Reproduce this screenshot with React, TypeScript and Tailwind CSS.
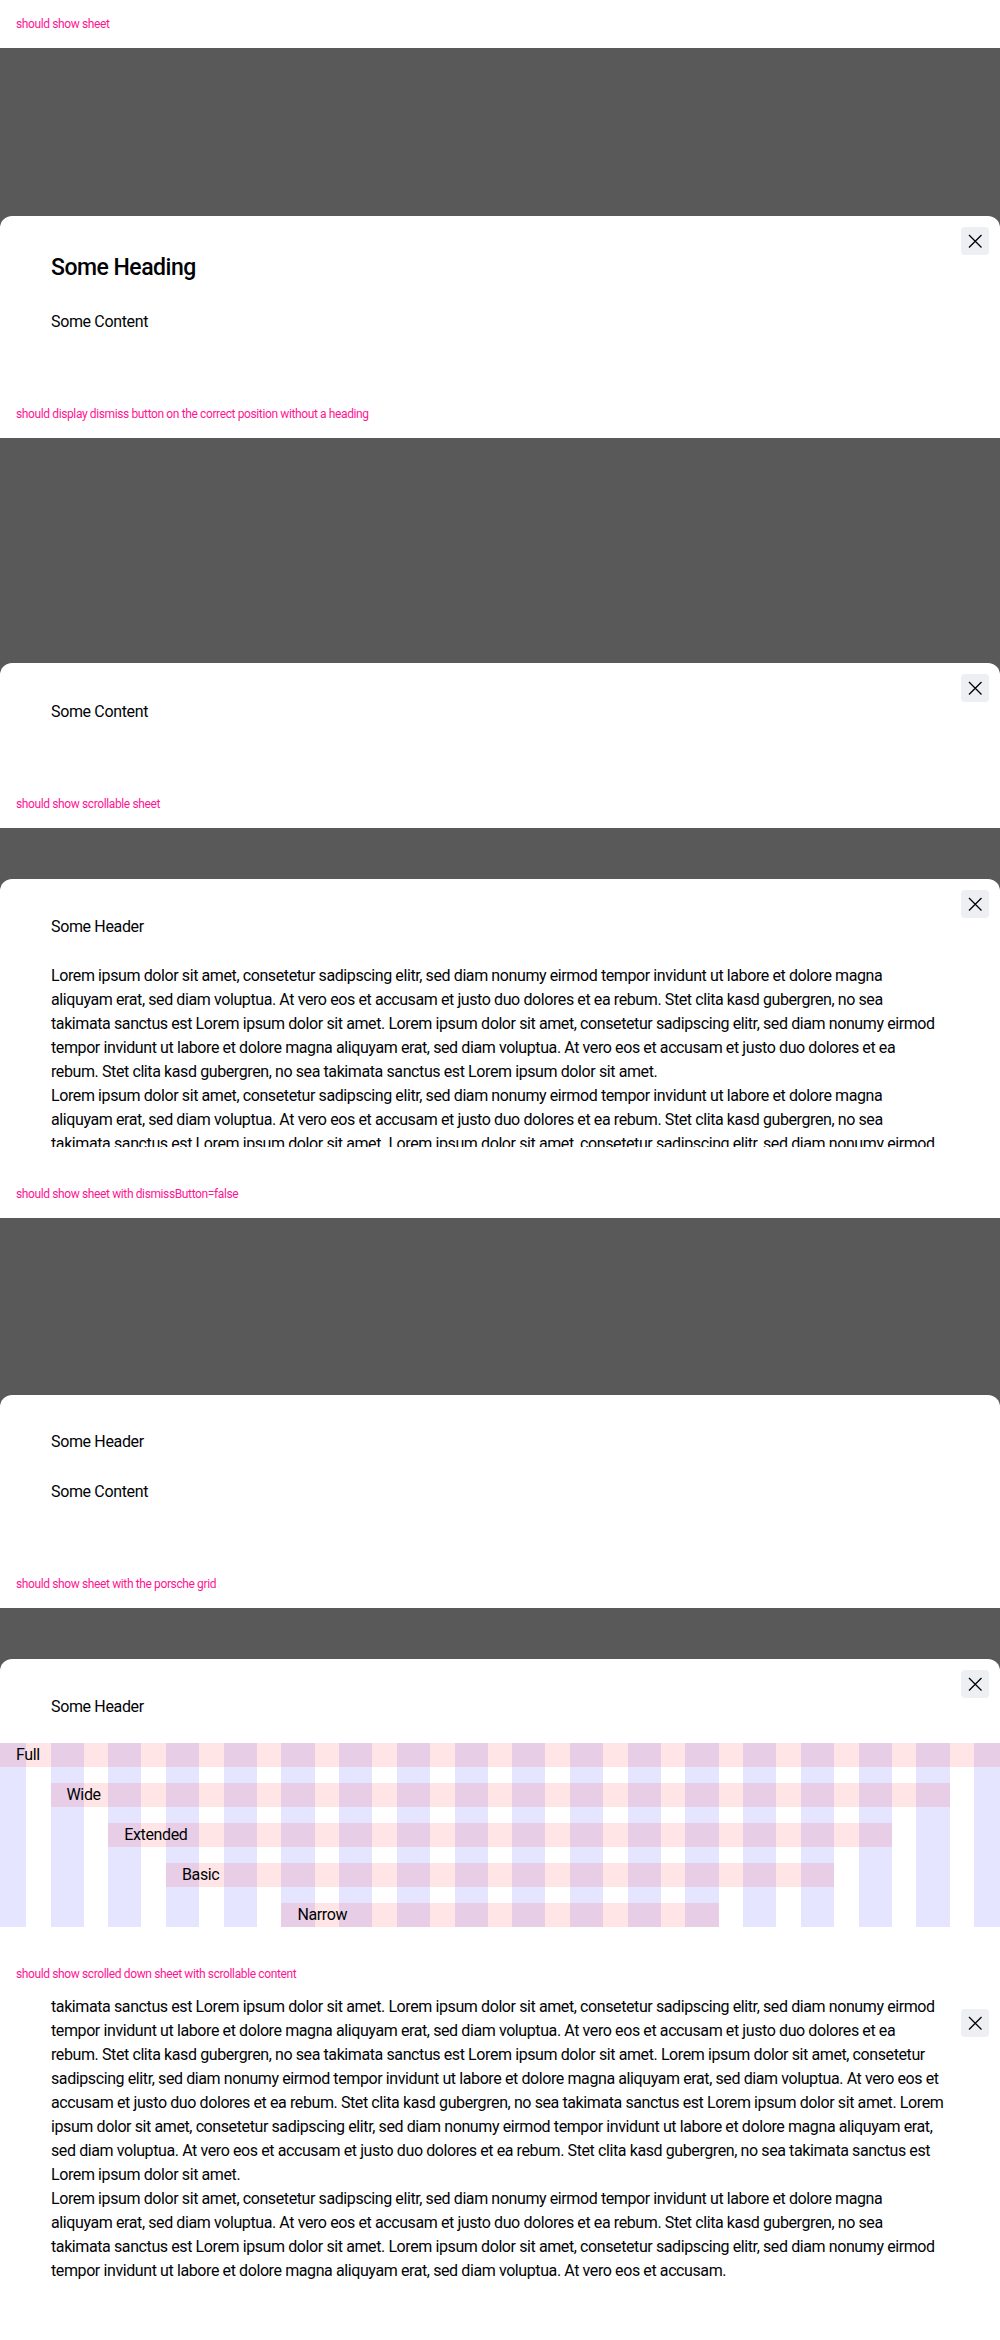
import React from "react";

const P1 = [
  "Lorem ipsum dolor sit amet, consetetur sadipscing elitr, sed diam nonumy eirmod tempor invidunt ut labore et dolore magna",
  "aliquyam erat, sed diam voluptua. At vero eos et accusam et justo duo dolores et ea rebum. Stet clita kasd gubergren, no sea",
  "takimata sanctus est Lorem ipsum dolor sit amet. Lorem ipsum dolor sit amet, consetetur sadipscing elitr, sed diam nonumy eirmod",
  "tempor invidunt ut labore et dolore magna aliquyam erat, sed diam voluptua. At vero eos et accusam et justo duo dolores et ea",
  "rebum. Stet clita kasd gubergren, no sea takimata sanctus est Lorem ipsum dolor sit amet.",
];

const P2 = [
  "Lorem ipsum dolor sit amet, consetetur sadipscing elitr, sed diam nonumy eirmod tempor invidunt ut labore et dolore magna",
  "aliquyam erat, sed diam voluptua. At vero eos et accusam et justo duo dolores et ea rebum. Stet clita kasd gubergren, no sea",
  "takimata sanctus est Lorem ipsum dolor sit amet. Lorem ipsum dolor sit amet, consetetur sadipscing elitr, sed diam nonumy eirmod",
  "tempor invidunt ut labore et dolore magna aliquyam erat, sed diam voluptua. At vero eos et accusam et justo duo dolores et ea",
  "rebum. Stet clita kasd gubergren, no sea takimata sanctus est Lorem ipsum dolor sit amet. Lorem ipsum dolor sit amet, consetetur",
  "sadipscing elitr, sed diam nonumy eirmod tempor invidunt ut labore et dolore magna aliquyam erat, sed diam voluptua. At vero eos et",
  "accusam et justo duo dolores et ea rebum. Stet clita kasd gubergren, no sea takimata sanctus est Lorem ipsum dolor sit amet. Lorem",
  "ipsum dolor sit amet, consetetur sadipscing elitr, sed diam nonumy eirmod tempor invidunt ut labore et dolore magna aliquyam erat,",
  "sed diam voluptua. At vero eos et accusam et justo duo dolores et ea rebum. Stet clita kasd gubergren, no sea takimata sanctus est",
  "Lorem ipsum dolor sit amet.",
];

const P3 = [
  "Lorem ipsum dolor sit amet, consetetur sadipscing elitr, sed diam nonumy eirmod tempor invidunt ut labore et dolore magna",
  "aliquyam erat, sed diam voluptua. At vero eos et accusam et justo duo dolores et ea rebum. Stet clita kasd gubergren, no sea",
  "takimata sanctus est Lorem ipsum dolor sit amet. Lorem ipsum dolor sit amet, consetetur sadipscing elitr, sed diam nonumy eirmod",
  "tempor invidunt ut labore et dolore magna aliquyam erat, sed diam voluptua. At vero eos et accusam.",
];

function Para({ lines }: { lines: string[] }) {
  return (
    <p className="text-[16px] leading-6 tracking-[-0.4px]">
      {lines.map((l, i) => (
        <span key={i} className="block whitespace-nowrap">
          {l}
        </span>
      ))}
    </p>
  );
}

function Label({ children }: { children: React.ReactNode }) {
  return (
    <div className="h-12 flex items-center px-4 text-[12px] leading-4 tracking-[-0.38px] text-[#ff1493] bg-white">
      {children}
    </div>
  );
}

function CloseButton() {
  return (
    <button
      type="button"
      className="absolute top-[11px] right-[11px] w-7 h-7 rounded-[4px] bg-[#eeeff2] flex items-center justify-center"
      aria-label="Dismiss"
    >
      <svg width="28" height="28" viewBox="0 0 28 28" fill="none">
        <path d="M8 8L20.5 20.5M20.5 8L8 20.5" stroke="#010205" strokeWidth="1.3" />
      </svg>
    </button>
  );
}

function Backdrop({ children }: { children: React.ReactNode }) {
  return <div className="h-[342px] bg-[#595959] flex flex-col overflow-hidden">{children}</div>;
}

const COLS = [
  "col-start-1",
  "col-start-2",
  "col-start-3",
  "col-start-4",
  "col-start-5",
  "col-start-6",
  "col-start-7",
  "col-start-8",
  "col-start-9",
  "col-start-10",
  "col-start-11",
  "col-start-12",
  "col-start-13",
  "col-start-14",
  "col-start-15",
  "col-start-16",
  "col-start-17",
  "col-start-18",
];

function PorscheGrid() {
  const rowCls = "bg-[rgba(255,0,0,0.1)] h-6 leading-6 pl-4 text-[16px] tracking-[-0.35px]";
  return (
    <div className="grid grid-cols-[26px_repeat(16,minmax(0,1fr))_26px] grid-rows-[repeat(5,24px)] gap-x-[24.5px] gap-y-4">
      {COLS.map((c) => (
        <div key={c} className={`${c} row-span-full bg-[rgba(0,0,255,0.1)]`} />
      ))}
      <div className={`col-[1/19] row-start-1 ${rowCls}`}>Full</div>
      <div className={`col-[2/18] row-start-2 ${rowCls}`}>Wide</div>
      <div className={`col-[3/17] row-start-3 ${rowCls}`}>Extended</div>
      <div className={`col-[4/16] row-start-4 ${rowCls}`}>Basic</div>
      <div className={`col-[6/14] row-start-5 ${rowCls}`}>Narrow</div>
    </div>
  );
}

const T16 = "text-[16px] leading-6 tracking-[-0.35px]";

export default function App() {
  return (
    <div className="w-[1000px] bg-white text-[#010205] [font-family:Roboto,'Liberation_Sans',sans-serif]">
      {/* 1 */}
      <Label>should show sheet</Label>
      <Backdrop>
        <div className="mt-auto relative bg-white rounded-t-xl pt-9 pb-14 px-[51px]">
          <CloseButton />
          <h2 className="text-[23px] leading-8 font-medium tracking-[-0.5px]">Some Heading</h2>
          <p className={`mt-[26px] ${T16}`}>Some Content</p>
        </div>
      </Backdrop>

      {/* 2 */}
      <Label>should display dismiss button on the correct position without a heading</Label>
      <Backdrop>
        <div className="mt-auto relative bg-white rounded-t-xl pt-[37px] pb-14 px-[51px]">
          <CloseButton />
          <p className={T16}>Some Content</p>
        </div>
      </Backdrop>

      {/* 3 */}
      <Label>should show scrollable sheet</Label>
      <Backdrop>
        <div className="mt-auto relative bg-white rounded-t-xl h-[291px] pb-[23px] flex flex-col">
          <CloseButton />
          <div className="flex-1 overflow-hidden pt-9 px-[51px]">
            <div className={T16}>Some Header</div>
            <div className="mt-[25px]">
              <Para lines={P1} />
              <Para lines={P2} />
              <Para lines={P3} />
            </div>
          </div>
        </div>
      </Backdrop>

      {/* 4 */}
      <Label>should show sheet with dismissButton=false</Label>
      <Backdrop>
        <div className="mt-auto relative bg-white rounded-t-xl pt-[35px] pb-14 px-[51px]">
          <div className={T16}>Some Header</div>
          <p className={`mt-[26px] ${T16}`}>Some Content</p>
        </div>
      </Backdrop>

      {/* 5 */}
      <Label>should show sheet with the porsche grid</Label>
      <Backdrop>
        <div className="mt-auto relative bg-white rounded-t-xl h-[291px] pb-[23px] flex flex-col">
          <CloseButton />
          <div className="flex-1 overflow-hidden pt-9">
            <div className={`px-[51px] ${T16}`}>Some Header</div>
            <div className="mt-6">
              <PorscheGrid />
            </div>
          </div>
        </div>
      </Backdrop>

      {/* 6 */}
      <Label>should show scrolled down sheet with scrollable content</Label>
      <div className="h-[342px] bg-white relative">
        <div className="h-full overflow-hidden flex flex-col justify-end px-[51px] pb-[57px]">
          <Para lines={P1} />
          <Para lines={P2} />
          <Para lines={P3} />
        </div>
        <CloseButton />
      </div>
    </div>
  );
}
